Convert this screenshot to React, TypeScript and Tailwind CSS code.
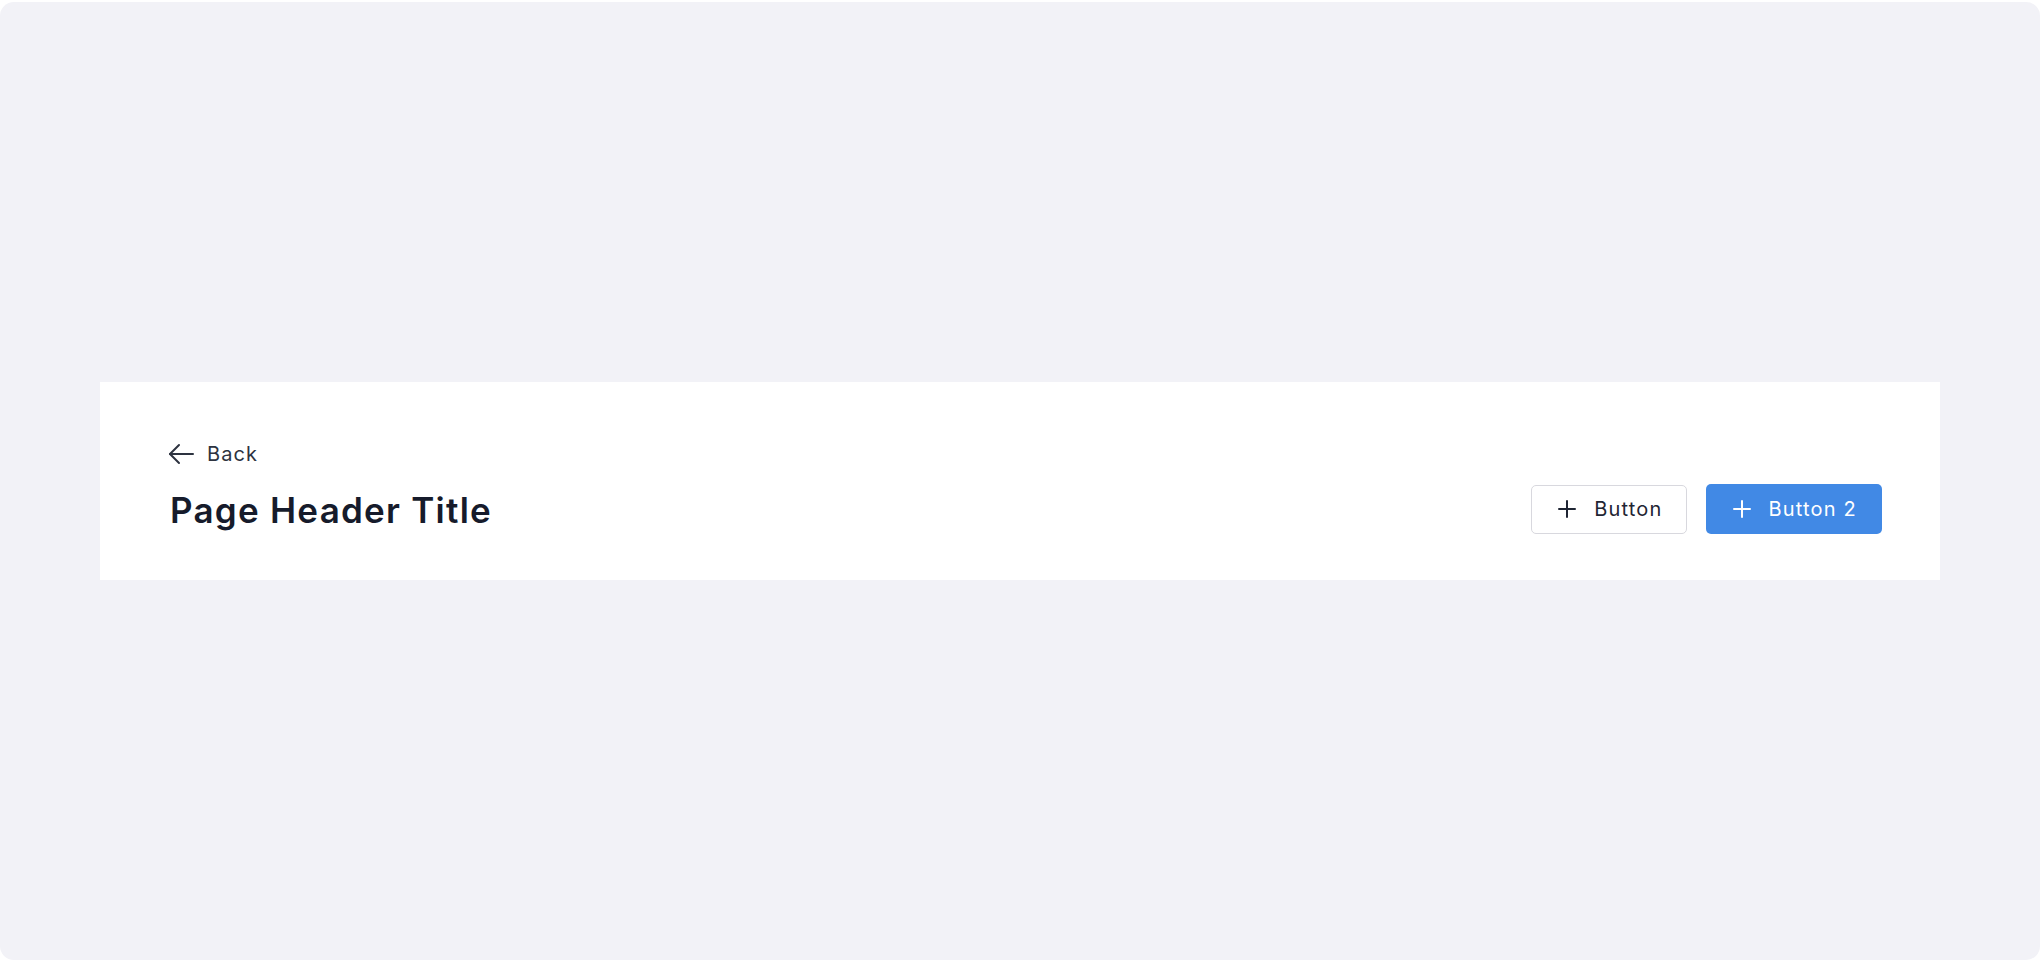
const font = { fontFamily: "Inter, 'Noto Sans', sans-serif" };

function ArrowLeftIcon() {
  return (
    <svg width="26" height="22" viewBox="0 0 26 22" fill="none" stroke="currentColor" strokeWidth="2" strokeLinecap="round" strokeLinejoin="round">
      <path d="M11 2 2 11l9 9" />
      <path d="M2 11h23" />
    </svg>
  );
}

function PlusIcon() {
  return (
    <svg width="18" height="18" viewBox="0 0 18 18" fill="none" stroke="currentColor" strokeWidth="2" strokeLinecap="round">
      <path d="M9 1v16" />
      <path d="M1 9h16" />
    </svg>
  );
}

export default function App() {
  return (
    <div className="w-[2041px] h-[961px] bg-white pt-[2px] pr-[1px] pb-[1px] tracking-[1.2px]" style={font}>
      <div className="h-full rounded-[14px] bg-[#f2f2f7] flex items-center px-[100px]">
        {/* Page header */}
        <div className="flex-1 bg-white pt-[60px] pb-[48px] pl-[68px] pr-[58px] flex items-end justify-between">
          <div className="flex flex-col">
            <button className="flex items-center gap-[13px] text-[20px] leading-[24px] tracking-[1.1px] text-[#2d3340]">
              <ArrowLeftIcon />
              <span>Back</span>
            </button>
            <h1 className="mt-[22px] pl-[2px] text-[35px] leading-[44px] font-semibold tracking-[1.25px] text-[#161b2b]">
              Page Header Title
            </h1>
          </div>
          <div className="flex items-center gap-[19px] mb-[-2px]">
            <button className="h-[49px] flex items-center gap-[18px] pl-[26px] pr-[24px] rounded-[5px] border border-[#d8d8de] bg-white text-[20px] text-[#1f2533]">
              <PlusIcon />
              <span>Button</span>
            </button>
            <button className="h-[50px] flex items-center gap-[17px] pl-[27px] pr-[25px] rounded-[5px] bg-[#4189e5] text-[20px] text-white">
              <PlusIcon />
              <span>Button 2</span>
            </button>
          </div>
        </div>
      </div>
    </div>
  );
}
